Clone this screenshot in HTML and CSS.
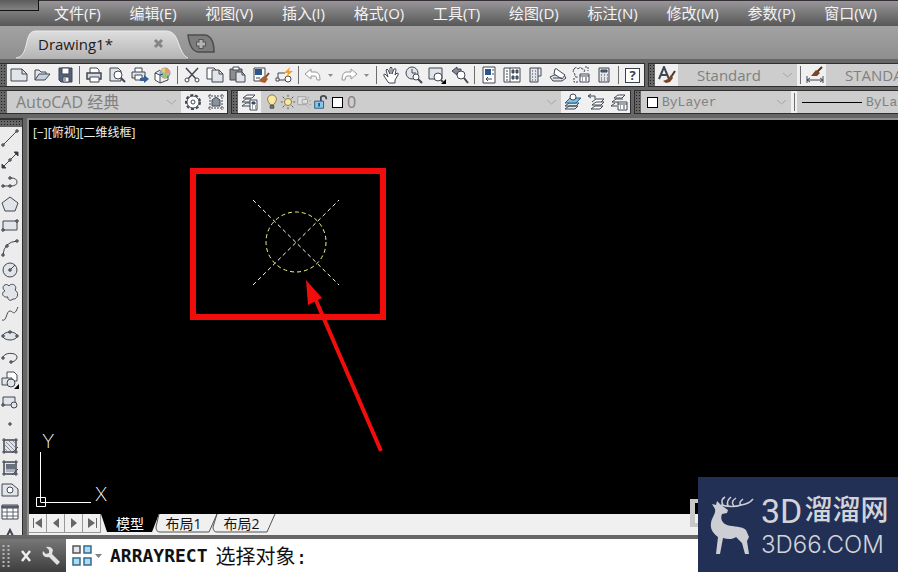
FILE: index.html
```html
<!DOCTYPE html>
<html lang="zh-CN">
<head>
    <meta charset="UTF-8">
    <meta name="viewport" content="width=device-width, initial-scale=1.0">
    <title>Drawing1 - AutoCAD</title>
    <link rel="stylesheet" href="styles.css">
</head>
<body>
    <header class="menu-bar">
        <div class="app-corner"></div>
        <nav class="menu">
            <a href="#">文件(F)</a>
            <a href="#">编辑(E)</a>
            <a href="#">视图(V)</a>
            <a href="#">插入(I)</a>
            <a href="#">格式(O)</a>
            <a href="#">工具(T)</a>
            <a href="#">绘图(D)</a>
            <a href="#">标注(N)</a>
            <a href="#">修改(M)</a>
            <a href="#">参数(P)</a>
            <a href="#">窗口(W)</a>
        </nav>
    </header>

    <div class="file-tabs">
        <div class="file-tab">
            <svg class="tab-shape" width="172" height="29" viewBox="0 0 172 29">
                <defs>
                    <linearGradient id="tabFill" x1="0" y1="0" x2="0" y2="1">
                        <stop offset="0" stop-color="#dedede"/>
                        <stop offset="1" stop-color="#b4b4b4"/>
                    </linearGradient>
                </defs>
                <path d="M0 29C6 27 8 23 10 16C12 7 13 1 20 1H150C157 1 160 6 162 12C165 20 167 26 172 29Z" fill="url(#tabFill)"/>
                <path d="M0 28C6 27 8 23 10 16C12 7 13 1 20 1H150C157 1 160 6 162 12C165 20 167 26 172 28" fill="none" stroke="#ececec"/>
            </svg>
            <span class="tab-name">Drawing1*</span>
            <button class="tab-close" aria-label="关闭">
                <svg width="11" height="11" viewBox="0 0 11 11"><path d="M2 2L9 9M9 2L2 9" stroke="#858585" stroke-width="3"/></svg>
            </button>
        </div>
        <button class="tab-add" aria-label="新建">
            <svg width="28" height="19" viewBox="0 0 28 19">
                <path d="M1 1H18C25 2 27 9 27 18H11C4 17 2 9 1 1Z" fill="#7d7d7d" stroke="#4c4c4c" stroke-width="1.5"/>
                <path d="M14 5V15M9 10H19" stroke="#555" stroke-width="5"/>
                <path d="M14 6V14M10 10H18" stroke="#b4b4b4" stroke-width="3"/>
            </svg>
        </button>
    </div>

    <div class="toolbars">
        <div class="toolbar-row">
            <div class="grip"></div>
            <div class="toolbar">
                <button class="tool"><svg viewBox="0 0 18 18"><path class="pale" d="M1 3H12L17 8V15H1Z"/><path d="M12 3V8H17"/></svg></button>
                <button class="tool"><svg viewBox="0 0 18 18"><path class="pale" d="M2 14V4H6L8 6H13V8"/><path class="blue-pale" d="M2 14L6 8H17L12 14Z"/></svg></button>
                <button class="tool"><svg viewBox="0 0 18 18"><path d="M3 2H16V16H5L3 14Z" fill="#52627c"/><path class="white" d="M6 2H13V8H6Z"/><path class="white" d="M7 11H13V16H7Z"/><path d="M9 12V15"/></svg></button>
                <span class="sep"></span>
                <button class="tool"><svg viewBox="0 0 18 18"><path class="white" d="M5 7V2H12L14 4V7"/><path d="M2 7H16V13H2Z" fill="#d5dae2" stroke-width="1.5"/><path class="white" d="M5 11H14V16H5Z"/></svg></button>
                <button class="tool"><svg viewBox="0 0 18 18"><path class="pale" d="M2 2H10L13 5V15H2Z"/><circle class="white" cx="10" cy="9" r="4"/><path d="M13 12L17 16" stroke-width="2"/></svg></button>
                <button class="tool"><svg viewBox="0 0 18 18"><path class="white" d="M4 6V2H11V6"/><path class="pale" d="M1 6H14V12H1Z"/><path class="white" d="M4 9H11V14H4Z"/><path d="M9 12H13V9L18 13L13 17V15H9Z" fill="#315f96" stroke="none"/></svg></button>
                <button class="tool"><svg viewBox="0 0 18 18"><circle cx="11" cy="7" r="5" fill="#8cc5c8" stroke="#8d9199"/><path d="M11 2A5 5 0 0 1 16 7L11 7Z" fill="#e59a6c" stroke="none"/><path d="M11 7L15 10A5 5 0 0 1 9 12Z" fill="#a2c060" stroke="none"/><path d="M11 7L7 4A5 5 0 0 1 11 2Z" fill="#e9d070" stroke="none"/><path class="white" d="M1 7L6 9V17L1 14Z"/><path d="M1 7L6 4M6 9L9 8M6 17L14 14V10"/></svg></button>
                <span class="sep"></span>
                <button class="tool"><svg viewBox="0 0 18 18"><path d="M3 2L14 14M15 2L4 14" stroke-width="1.5"/><circle class="white" cx="4" cy="14" r="2"/><circle class="white" cx="14" cy="14" r="2"/></svg></button>
                <button class="tool"><svg viewBox="0 0 18 18"><path class="white" d="M1 2H8L11 5V13H1Z"/><path class="pale" d="M6 4H13L17 8V16H6Z"/><path d="M13 4V8H17"/></svg></button>
                <button class="tool"><svg viewBox="0 0 18 18"><path d="M1 3H13V14H1Z" fill="#8d8d8d"/><path class="white" d="M4 1H10V4H4Z"/><path class="pale" d="M7 6H13L16 9V16H7Z"/><path d="M13 6V9H16"/></svg></button>
                <button class="tool"><svg viewBox="0 0 18 18"><path class="white" d="M2 2H13V15H2Z"/><path d="M3 3H10V9H3Z" fill="#28568e" stroke="none"/><path d="M4 12H8"/><path d="M17 7L13 12" stroke="#705039" stroke-width="2"/><path d="M7 14L12 10L16 13L13 17L9 16Z" fill="#a6612d" stroke="none"/></svg></button>
                <button class="tool"><svg viewBox="0 0 18 18"><path d="M2 14H12M3 14V7H10"/><path class="white" d="M1 12H4V15H1Z"/><circle class="white" cx="13" cy="13" r="3"/><path d="M15 1L9 7H13L11 11L18 5H14Z" fill="#f1a02b" stroke="none"/></svg></button>
                <span class="sep"></span>
                <button class="tool"><svg class="faded" viewBox="0 0 18 18"><path class="white" d="M1 8L7 3V6H12Q16 7 16 14H13Q13 10 11 10H7V13Z"/></svg></button>
                <button class="tool-arrow"><svg viewBox="0 0 5 3"><path d="M0 0H5L2.500 3Z"/></svg></button>
                <button class="tool"><svg class="faded" viewBox="0 0 18 18"><path class="white" d="M17 8L11 3V6H6Q2 7 2 14H5Q5 10 7 10H11V13Z"/></svg></button>
                <button class="tool-arrow"><svg viewBox="0 0 5 3"><path d="M0 0H5L2.500 3Z"/></svg></button>
                <span class="sep"></span>
                <button class="tool"><svg viewBox="0 0 18 18"><path class="white" d="M6 16L2 10Q1 8 3 8L6 11L4 4Q5 2 6 4L8 8V2Q9 0 10 2V8L12 3Q14 2 14 4L13 9L15 7Q17 7 16 9L13 14V17H7Z"/></svg></button>
                <button class="tool"><svg viewBox="0 0 18 18"><circle class="pale" cx="7" cy="7" r="6"/><path d="M7 3V7H11"/><circle class="white" cx="11" cy="11" r="3"/><path d="M13 13L17 17" stroke-width="2"/></svg></button>
                <button class="tool"><svg viewBox="0 0 18 18"><path class="pale" d="M1 2H14V13H1Z"/><circle class="white" cx="10" cy="11" r="4"/><path d="M13 14L15 16" stroke-width="2"/><path d="M18 13V18H13Z" fill="#000" stroke="none"/></svg></button>
                <button class="tool"><svg viewBox="0 0 18 18"><path d="M1 5L6 1V3H10V7H6V9Z" fill="#858b94"/><circle class="white" cx="10" cy="9" r="4"/><path d="M13 12L17 17" stroke-width="2"/></svg></button>
                <span class="sep"></span>
                <button class="tool"><svg viewBox="0 0 18 18"><path class="white" d="M3 1H15V17H3Z"/><path d="M5 3H11V9H5Z" fill="#28568e" stroke="none"/><path d="M13 3V5M13 7V9M6 13H12M6 13L8 11M6 13L8 15"/></svg></button>
                <button class="tool"><svg viewBox="0 0 18 18"><path class="white" d="M1 2H17V16H1Z"/><path d="M7 2V16M3 5H5M3 8H5M3 11H5M3 14H5"/><path d="M9 4H11V7H9ZM13 4H15V7H13ZM9 10H11V13H9ZM13 10H15V13H13Z" fill="#52627c"/></svg></button>
                <button class="tool"><svg viewBox="0 0 18 18"><path class="pale" d="M4 2H12V16H4Z"/><path d="M12 2H15V10H12M6 5H7M9 5H10M6 8H7M9 8H10M6 11H7M9 11H10M6 14H7M9 14H10"/></svg></button>
                <button class="tool"><svg viewBox="0 0 18 18"><path class="pale" d="M1 11L5 9H15L17 12L13 15H4Z"/><path class="white" d="M6 3Q7 2 9 4L16 9L13 13L5 8Z"/><path d="M4 12H13"/></svg></button>
                <button class="tool"><svg viewBox="0 0 18 18"><path d="M2 3Q4 0 6 3Q9 0 10 3Q14 3 12 6M2 3Q0 6 3 8Q2 12 6 11" stroke-dasharray="3 1"/><path d="M13 1H16V5M2 12V16H6" stroke-dasharray="2 1"/><path class="white" d="M8 8H17V16H8Z"/><path d="M8 10H17M10 12H11M13 12H15M10 14H11M13 14H15"/></svg></button>
                <button class="tool"><svg viewBox="0 0 18 18"><path class="pale" d="M4 2H14V16H4Z"/><path d="M6 4H12V6H6Z" fill="#52627c"/><path d="M6 9H7M9 9H10M12 9H13M6 12H7M9 12H10M12 12H13M6 14H7M9 14H10M12 14H13"/></svg></button>
                <span class="sep"></span>
                <button class="tool help">?</button>
            </div>

            <div class="grip grip-inner"></div>
            <div class="toolbar toolbar-last">
                <button class="tool"><svg viewBox="0 0 18 18"><path d="M1 13L6 1L11 13M3 9H9" stroke-width="2"/><path d="M17 5L13 11" stroke="#4b3528" stroke-width="2"/><path d="M5 15L10 13L13 9L15 12L12 16L8 17Z" fill="#7a4527" stroke="none"/></svg></button>
                <div class="combo combo-text">
                    <select aria-label="文字样式"><option>Standard</option></select>
                    <svg class="chevron" viewBox="0 0 9 5"><path d="M0 0L4.500 4L9 0"/></svg>
                </div>
                <span class="sep"></span>
                <button class="tool"><svg viewBox="0 0 18 18"><path d="M1 10V17M17 10V17M1 14H17M4 12L1 14L4 16M14 12L17 14L14 16"/><path d="M16 1L11 6" stroke="#4b3528" stroke-width="2"/><path d="M5 10L10 4L14 7L11 10Z" fill="#7a4527" stroke="none"/></svg></button>
                <div class="combo combo-dim">
                    <select aria-label="标注样式"><option>STANDARD</option></select>
                </div>
            </div>
        </div>

        <div class="toolbar-row">
            <div class="grip"></div>
            <div class="toolbar">
                <div class="combo combo-workspace">
                    <select aria-label="工作空间"><option>AutoCAD 经典</option></select>
                    <svg class="chevron" viewBox="0 0 9 5"><path d="M0 0L4.500 4L9 0"/></svg>
                </div>
                <button class="tool"><svg viewBox="0 0 18 18"><circle cx="9" cy="9" r="7" stroke-width="2" stroke-dasharray="3 2"/><circle class="white" cx="9" cy="9" r="6"/><circle cx="9" cy="9" r="2"/></svg></button>
                <button class="tool"><svg viewBox="0 0 18 18"><path d="M3 1V17M15 1V17M1 3H17M1 15H17" stroke-dasharray="2 1"/><path d="M5 13V7L9 4L13 7V13Z" fill="#8b929c"/></svg></button>
            </div>

            <div class="grip grip-inner"></div>
            <div class="toolbar">
                <button class="tool"><svg viewBox="0 0 18 18"><path class="white" d="M2 5L6 2H14L11 5ZM1 9L5 6H10M1 9H9M1 13L5 10H9M1 13H9"/><path class="white" d="M9 7H16V17H9Z"/><path d="M11 9H14V11H11Z" fill="#28568e"/><path d="M11 13H12M14 13H15M11 15H12M14 15H15"/></svg></button>
                <div class="combo combo-layer">
                    <svg class="icon" viewBox="0 0 18 18"><path d="M7 12Q4 8 4 6A5 5 0 0 1 14 6Q14 8 11 12Z" fill="#f7e8a2" stroke="#806c3c"/><path d="M7 13H11V16H7Z" fill="#777"/></svg>
                    <svg class="icon" viewBox="0 0 18 18"><circle cx="9" cy="9" r="4" fill="#f7e8a2" stroke="#806c3c"/><path d="M9 1V3M9 15V17M1 9H3M15 9H17M3 3L5 5M13 13L15 15M15 3L13 5M5 13L3 15"/></svg>
                    <svg class="icon dim" viewBox="0 0 18 18"><path class="white" d="M2 3H11V12H2Z"/><path class="white" d="M7 6H13V11H7Z"/><path d="M14 3V5M15 8L17 7M12 13L15 16M17 12H15" stroke-dasharray="2 1"/></svg>
                    <svg class="icon" viewBox="0 0 18 18"><path d="M10 8V4Q10 2 13 2Q16 2 16 5V6" stroke-width="2"/><path d="M3 8H13V16H3Z" fill="#88c6e6" stroke="#235477"/><path d="M8 10V14" stroke="#235477" stroke-width="2"/></svg>
                    <span class="swatch"></span>
                    <select aria-label="图层"><option>0</option></select>
                    <svg class="chevron" viewBox="0 0 9 5"><path d="M0 0L4.500 4L9 0"/></svg>
                </div>
                <button class="tool"><svg viewBox="0 0 18 18"><path d="M1 16L5 13H14L11 16ZM1 13L5 10H15L12 13Z" fill="#dfe9f2"/><path d="M1 10L6 5H17L12 10Z" fill="#86bddd" stroke="#2c618a"/><circle class="white" cx="9" cy="4" r="3"/></svg></button>
                <button class="tool"><svg viewBox="0 0 18 18"><path class="white" d="M4 16L8 13H16L13 16ZM5 12L9 9H17L14 12ZM5 9L9 6H17L14 9"/><path d="M1 3H8V6M1 3L4 1M1 3L4 5"/></svg></button>
                <button class="tool"><svg viewBox="0 0 18 18"><path class="white" d="M4 5L8 2H15L12 5ZM2 9L6 6H13M2 9H8M1 13L5 10M1 13H7"/><path class="white" d="M8 9H17V17H8Z"/><path d="M8 11H17M10 13H11M13 13H15M10 15H11M13 15H15"/></svg></button>
            </div>

            <div class="grip grip-inner"></div>
            <div class="toolbar toolbar-last">
                <div class="combo combo-color">
                    <span class="swatch"></span>
                    <select class="mono" aria-label="颜色"><option>ByLayer</option></select>
                    <svg class="chevron" viewBox="0 0 9 5"><path d="M0 0L4.500 4L9 0"/></svg>
                </div>
                <span class="sep"></span>
                <div class="combo combo-linetype">
                    <span class="line-sample"></span>
                    <select class="mono" aria-label="线型"><option>ByLayer</option></select>
                </div>
            </div>
        </div>
    </div>

    <main>
        <aside class="draw-tools">
            <div class="grip-top"></div>
            <button class="tool"><svg viewBox="0 0 18 18"><path d="M2 16L16 2"/><path class="node" d="M1 15H3V17H1ZM15 1H17V3H15Z"/></svg></button>
            <button class="tool"><svg viewBox="0 0 18 18"><path d="M2 16L16 2"/><path d="M1 13V17H5ZM13 1H17V5Z" fill="#30343c"/><path class="node" d="M8 8H10V10H8Z"/></svg></button>
            <button class="tool"><svg viewBox="0 0 18 18"><path d="M2 13H10Q16 13 16 9Q16 5 10 5"/><path class="node" d="M1 12H3V14H1ZM8 12H10V14H8ZM8 4H10V6H8Z"/></svg></button>
            <button class="tool"><svg viewBox="0 0 18 18"><path class="pale" d="M9 2L17 8L14 16H4L1 8Z"/></svg></button>
            <button class="tool"><svg viewBox="0 0 18 18"><path class="pale" d="M2 4H16V13H2Z"/><path class="node" d="M1 12H3V14H1ZM15 3H17V5H15Z"/></svg></button>
            <button class="tool"><svg viewBox="0 0 18 18"><path d="M2 16Q3 3 16 2"/><path class="node" d="M1 15H3V17H1ZM5 6H7V8H5ZM15 1H17V3H15Z"/></svg></button>
            <button class="tool"><svg viewBox="0 0 18 18"><circle class="pale" cx="9" cy="9" r="7"/><path d="M9 9L14 4"/><path class="node" d="M8 8H10V10H8Z"/></svg></button>
            <button class="tool"><svg viewBox="0 0 18 18"><path class="pale" d="M4 8C-1 4 5 -1 8 3C11 -1 17 3 14 7C19 10 16 17 12 16C9 19 6 16 7 14C1 15 0 9 4 8Z"/></svg></button>
            <button class="tool"><svg viewBox="0 0 18 18"><path d="M1 15C6 17 5 6 9 6C12 6 13 12 17 2"/></svg></button>
            <button class="tool"><svg viewBox="0 0 18 18"><ellipse class="pale" cx="9" cy="9" rx="7" ry="4"/><path class="node" d="M1 8H3V10H1ZM8 4H10V6H8ZM15 8H17V10H15Z"/></svg></button>
            <button class="tool"><svg viewBox="0 0 18 18"><path d="M2 9C2 3 16 3 16 8C16 11 13 13 9 13"/><path class="node" d="M1 8H3V10H1ZM9 12H11V14H9Z"/></svg></button>
            <button class="tool"><svg viewBox="0 0 18 18"><path class="white" d="M6 1H13L16 4V10H6Z"/><path class="pale" d="M1 7H11V14H1Z"/><circle class="pale" cx="10" cy="12" r="4"/><path d="M18 13V18H13Z" fill="#000" stroke="none"/></svg></button>
            <button class="tool"><svg viewBox="0 0 18 18"><path class="pale" d="M2 4H14V12H2Z"/><circle class="pale" cx="13" cy="12" r="3"/><path class="node" d="M1 11H3V13H1Z"/></svg></button>
            <button class="tool"><svg viewBox="0 0 18 18"><path class="node" d="M8 8H10V10H8Z"/></svg></button>
            <button class="tool"><svg viewBox="0 0 18 18"><path class="pale" d="M3 3H15V15H3Z"/><path d="M4 12L7 15M4 8L11 15M5 5L15 15M8 4L15 11M12 4L15 7" stroke="#8a8f98"/><path d="M3 1V17M15 1V17M1 3H17M1 15H17M11 16L17 10"/></svg></button>
            <button class="tool"><svg viewBox="0 0 18 18"><path class="pale" d="M3 3H15V15H3Z"/><path d="M5 5H14V10H5Z" fill="#69717e" stroke="none"/><path d="M5 10H14V13H5Z" fill="#aab0b9" stroke="none"/><path d="M3 1V17M15 1V17M1 3H17M1 15H17M11 16L17 10"/></svg></button>
            <button class="tool"><svg viewBox="0 0 18 18"><path class="pale" d="M1 3H11L17 8V15H1Z"/><circle class="white" cx="9" cy="9" r="3"/></svg></button>
            <button class="tool"><svg viewBox="0 0 18 18"><path class="white" d="M1 2H17V16H1Z"/><path d="M1 3H17V5H1Z" fill="#69717e"/><path d="M1 9H17M1 13H17M6 5V16M12 5V16" stroke-width="0.8"/></svg></button>
            <button class="tool"><svg viewBox="0 0 18 18"><path d="M3 17L9 5L15 17M5 13H13" stroke-width="2"/></svg></button>
        </aside>

        <section class="workspace">
            <div class="canvas">
                <div class="view-label">[−][俯视][二维线框]</div>
                <svg class="drawing" width="400" height="360" viewBox="0 0 400 360">
                    <path d="M224 80L310 165M224 165L310 80" stroke="#fffde0" stroke-dasharray="4 3"/>
                    <circle cx="267" cy="122" r="30" fill="none" stroke="#f4f48c" stroke-dasharray="4 3"/>
                    <rect x="164" y="51" width="190" height="146" fill="none" stroke="#f20d0d" stroke-width="6"/>
                    <path d="M286 178L352 331" stroke="#f20d0d" stroke-width="4"/>
                    <path d="M277 160L293 178L279 185Z" fill="#f20d0d"/>
                </svg>
                <svg class="ucs" width="90" height="100" viewBox="0 0 90 100">
                    <path d="M11.500 38V88M11.500 88.500H62M7.500 83.500H16.500V92.500H7.500Z" fill="none" stroke="#fff"/>
                    <text x="13" y="34">Y</text>
                    <text x="66" y="87">X</text>
                </svg>
            </div>
            <div class="layout-tabs">
                <button class="step" aria-label="第一个"><svg width="10" height="12" viewBox="0 0 10 12"><path d="M9 1V11L2 6Z"/><path d="M0 1H1V11H0Z"/></svg></button>
                <button class="step" aria-label="上一个"><svg width="10" height="12" viewBox="0 0 10 12"><path d="M8 1V11L2 6Z"/></svg></button>
                <button class="step" aria-label="下一个"><svg width="10" height="12" viewBox="0 0 10 12"><path d="M2 1V11L8 6Z"/></svg></button>
                <button class="step" aria-label="最后一个"><svg width="10" height="12" viewBox="0 0 10 12"><path d="M1 1V11L8 6Z"/><path d="M9 1H10V11H9Z"/></svg></button>
                <button class="layout active">
                    <svg class="shape" width="58" height="19" viewBox="0 0 58 19"><path d="M0 0H58L51 18H6Z"/></svg>
                    <span>模型</span>
                </button>
                <button class="layout">
                    <svg class="shape" width="58" height="19" viewBox="0 0 58 19"><path d="M0 0L-3 13Q-3 18 1 18H50L58 0" fill="none" stroke="#555"/></svg>
                    <span>布局1</span>
                </button>
                <button class="layout">
                    <svg class="shape" width="58" height="19" viewBox="0 0 58 19"><path d="M0 0L-4 13Q-4 18 0 18H50L58 0" fill="none" stroke="#555"/></svg>
                    <span>布局2</span>
                </button>
            </div>
        </section>
    </main>

    <footer class="command-line">
        <div class="command-side">
            <svg width="8" height="22" viewBox="0 0 8 22"><path d="M1.500 0V22M6.500 0V22" stroke="#b5b5b5" stroke-width="2" stroke-dasharray="2 2"/></svg>
            <button aria-label="关闭"><svg width="12" height="12" viewBox="0 0 12 12"><path d="M2 1L10 11M10 1L2 11" stroke="#f0f0f0" stroke-width="2.500"/></svg></button>
            <button aria-label="自定义"><svg width="20" height="20" viewBox="0 0 20 20"><path d="M2 5L5 8L8 7L8 4L5 1Q10 0 12 4L11 8L19 16L16 19L8 11Q4 12 2 9Q1 7 2 5Z" fill="#e1e1e1"/></svg></button>
        </div>
        <div class="command-entry">
            <button class="array-icon" aria-label="最近使用的命令">
                <svg width="30" height="22" viewBox="0 0 30 22">
                    <path d="M1 1H8V8H1Z" fill="#e5e5e8" stroke="#555" stroke-width="1.500"/>
                    <path d="M12 1H19V8H12ZM1 13H8V20H1ZM12 13H19V20H12Z" fill="#a9dcf7" stroke="#35698c" stroke-width="1.500"/>
                    <path d="M23 9H30L26.500 13Z" fill="#808080"/>
                </svg>
            </button>
            <label for="command"><b>ARRAYRECT</b> <span>选择对象:</span></label>
            <input id="command" type="text">
        </div>
    </footer>

    <div class="watermark">
        <svg class="deer" width="46" height="60" viewBox="0 0 46 60">
            <path d="M3 9L7 10L8 6L12 10L19 15L18 18L13 19C11 24 13 28 18 30C25 32 33 31 37 35L40 42L38 46L40 59H36L33 48L27 42C23 45 18 44 14 43L11 59H7L9 42C4 38 1 34 2 28C3 22 7 19 6 14Z" fill="#ccced3"/>
            <path d="M12 10Q24 13 32 10Q40 9 44 4M14 10Q11 5 16 2M19 11Q17 6 22 2M25 11Q21 7 27 3M32 10Q29 8 34 4" fill="none" stroke="#ccced3" stroke-width="1.500"/>
        </svg>
        <div class="brand">
            <div class="brand-name"><b>3D</b>溜溜网</div>
            <div class="brand-site">3D66.COM</div>
        </div>
    </div>
</body>
</html>
```
FILE: styles.css
```css
/* General Styles */
*,
*::before {
    box-sizing: border-box;
}

body {
    margin: 0;
    height: 100vh;
    display: flex;
    flex-direction: column;
    overflow: hidden;
    position: relative;
    background: #666;
    font-family: "Open Sans", "Noto Sans CJK SC", sans-serif;
}

button {
    padding: 0;
    border: none;
    background: none;
    font-family: inherit;
    cursor: pointer;
}

/* Menu */
.menu-bar {
    flex: none;
    height: 26px;
    position: relative;
    border-top: 1px solid #353035;
    background: linear-gradient(#989698, #585858);
}

.app-corner {
    position: absolute;
    left: 0;
    top: -1px;
    width: 39px;
    height: 11px;
    border: solid #111;
    border-width: 0 1px 1px 0;
    background: linear-gradient(#5c5c5c, #828282);
}

.menu {
    display: flex;
    justify-content: space-between;
    padding: 0 21px 0 54px;
    line-height: 24px;
    white-space: nowrap;
}

.menu a {
    color: #f4f4f4;
    font-size: 15px;
    text-decoration: none;
}

/* File tabs */
.file-tabs {
    flex: none;
    display: flex;
    align-items: center;
    height: 33px;
    padding-left: 16px;
    background: linear-gradient(#a2a2a2, #8f8f8f);
}

.file-tab {
    display: flex;
    align-items: center;
    justify-content: space-between;
    position: relative;
    width: 171px;
    height: 33px;
    padding: 2px 23px 0 22px;
}

.tab-shape {
    position: absolute;
    left: 0;
    bottom: 0;
}

.tab-name {
    position: relative;
    color: #1c1c1c;
    font-size: 15px;
}

.tab-close {
    position: relative;
    display: flex;
}

.tab-add {
    display: flex;
    padding-top: 2px;
}

/* Toolbars */
.toolbars {
    flex: none;
    display: flex;
    flex-direction: column;
    gap: 3px;
    padding: 4px 0;
    background: #666;
}

.toolbar-row {
    display: flex;
    height: 24px;
}

.grip {
    flex: none;
    width: 7px;
    border: solid #2f2f2f;
    border-width: 1px 0;
    background: radial-gradient(circle, #1e1e1e 0 1px, #666 1px) 0 0 / 3px 3px;
}

.grip-inner {
    margin-left: 3px;
    border-left-width: 1px;
}

.toolbar {
    flex: none;
    display: flex;
    align-items: center;
    border: solid #2f2f2f;
    border-width: 1px 1px 1px 0;
    background: #f0f0f0;
}

.toolbar-last {
    flex: 1;
    border-right: none;
}

.tool {
    flex: none;
    display: flex;
    align-items: center;
    justify-content: center;
    width: 23px;
    height: 22px;
}

.tool svg,
.icon {
    flex: none;
    width: 18px;
    height: 18px;
    fill: none;
    stroke: #414753;
    stroke-width: 1;
}

.icon {
    width: 16px;
    height: 16px;
}

svg .white {
    fill: #fff;
}

svg .pale {
    fill: #e1e4e9;
}

svg .blue-pale {
    fill: #c8d2df;
}

svg .node {
    fill: #fff;
    stroke: #25282e;
}

.tool svg.faded {
    stroke: #979797;
}

.dim {
    opacity: 0.35;
}

.tool-arrow {
    flex: none;
    width: 13px;
    display: flex;
    justify-content: center;
}

.tool-arrow svg {
    width: 5px;
    height: 3px;
    fill: #8c8c8c;
}

.sep {
    flex: none;
    display: flex;
    justify-content: center;
    width: 6px;
    height: 18px;
}

.sep::before {
    content: "";
    width: 1px;
    background: #6d6d6d;
}

.help {
    width: 15px;
    height: 15px;
    margin: 0 4px;
    border: 1px solid #3b414c;
    background: #fff;
    color: #3b414c;
    font-size: 13px;
    font-weight: bold;
    line-height: 13px;
}

/* Combo boxes */
.combo {
    flex: none;
    display: flex;
    align-items: center;
    height: 22px;
    padding: 0 5px 0 9px;
    background: #cdcdcd;
}

.combo select {
    flex: 1;
    min-width: 0;
    height: 22px;
    padding: 0;
    appearance: none;
    border: none;
    background: none;
    color: #808080;
    font-family: inherit;
    font-size: 15px;
}

.combo select.mono {
    font-family: "Liberation Mono", monospace;
    font-size: 13px;
}

.chevron {
    flex: none;
    width: 9px;
    height: 5px;
    fill: none;
    stroke: #a6a6a6;
}

.combo-workspace {
    width: 174px;
}

.combo-workspace select,
.combo-layer select {
    font-size: 16px;
}

.combo-text {
    width: 119px;
    padding-left: 19px;
}

.combo-dim {
    flex: 1;
    padding: 0 0 0 19px;
}

.combo-layer {
    width: 300px;
    padding-left: 3px;
}

.combo-color {
    width: 150px;
    padding-left: 2px;
}

.combo-linetype {
    flex: 1;
    padding: 0 0 0 5px;
}

.swatch {
    flex: none;
    width: 11px;
    height: 11px;
    margin: 0 4px;
    border: 1px solid #000;
    background: #fff;
}

.line-sample {
    flex: none;
    width: 60px;
    height: 1px;
    margin-right: 4px;
    background: #000;
}

/* Drawing area */
main {
    flex: 1;
    min-height: 0;
    display: flex;
    gap: 4px;
}

.draw-tools {
    flex: none;
    width: 23px;
    overflow: hidden;
    border-right: 1px solid #2f2f2f;
    background: #ececec;
}

.draw-tools .tool {
    width: 20px;
}

.grip-top {
    height: 9px;
    border-top: 2px solid #333;
    background: radial-gradient(circle, #1e1e1e 0 1px, #666 1px) 0 0 / 3px 3px;
}

.workspace {
    flex: 1;
    min-width: 0;
    display: flex;
    flex-direction: column;
    border-top: 2px solid #8f8f8f;
    border-left: 2px solid #8f8f8f;
}

.canvas {
    flex: 1;
    min-height: 0;
    position: relative;
    overflow: hidden;
    background: #000;
}

.view-label {
    padding: 4px;
    color: #f0f0f0;
    font-size: 12px;
    line-height: 18px;
}

.drawing {
    position: absolute;
    left: 0;
    top: 0;
}

.ucs {
    position: absolute;
    left: 0;
    bottom: 0;
    fill: #fff;
    font-family: Inter, sans-serif;
    font-size: 19px;
    font-weight: 200;
}

.layout-tabs {
    flex: none;
    display: flex;
    height: 21px;
    padding-bottom: 2px;
    background: #f0f0f0;
}

.step {
    width: 18px;
    display: flex;
    align-items: center;
    justify-content: center;
    border: solid #999;
    border-width: 0 1px 1px 0;
    fill: #666;
}

.layout {
    width: 58px;
    padding-right: 9px;
    position: relative;
    color: #111;
    font-size: 14px;
    line-height: 19px;
}

.layout span {
    position: relative;
}

.layout .shape {
    position: absolute;
    left: 0;
    top: 0;
    overflow: visible;
}

.layout.active {
    padding-right: 0;
    color: #fff;
}

/* Command line */
.command-line {
    flex: none;
    display: flex;
    height: 33px;
    margin-top: 4px;
    background: #fff;
}

.command-side {
    flex: none;
    display: flex;
    align-items: center;
    justify-content: space-between;
    width: 66px;
    padding: 0 5px 0 2px;
    background: linear-gradient(#777, #3e3e3e);
}

.command-side button {
    display: flex;
}

.command-entry {
    flex: 1;
    display: flex;
    align-items: center;
    padding-left: 6px;
}

.array-icon {
    display: flex;
}

.command-entry label {
    display: flex;
    align-items: center;
    gap: 8px;
    padding-left: 8px;
    color: #111;
    font-family: "DejaVu Sans Mono", "Noto Sans CJK SC", monospace;
    font-size: 18px;
    white-space: nowrap;
}

.command-entry label span {
    font-size: 20px;
}

.command-entry input {
    flex: 1;
    min-width: 0;
    border: none;
    outline: none;
    font-size: 18px;
}

/* Site badge */
.watermark {
    position: absolute;
    right: 0;
    bottom: 0;
    display: flex;
    align-items: center;
    gap: 6px;
    width: 200px;
    height: 95px;
    padding-left: 11px;
    background: #233056;
    color: #d2d4d9;
}

/* Corner of the frame showing beside the badge */
.watermark::before {
    content: "";
    position: absolute;
    left: -8px;
    top: 22px;
    width: 8px;
    height: 28px;
    border: solid #c8c8c8;
    border-width: 4px 0 4px 5px;
}

.brand {
    white-space: nowrap;
}

.brand-name {
    display: flex;
    align-items: center;
    gap: 2px;
    font-family: Roboto, "Noto Sans CJK SC", sans-serif;
    font-size: 28px;
    font-weight: 500;
    line-height: 40px;
}

.brand-name b {
    font-size: 34px;
    font-weight: 400;
}

.brand-site {
    font-family: Inter, sans-serif;
    font-size: 24px;
    font-weight: 300;
    line-height: 28px;
}
```
